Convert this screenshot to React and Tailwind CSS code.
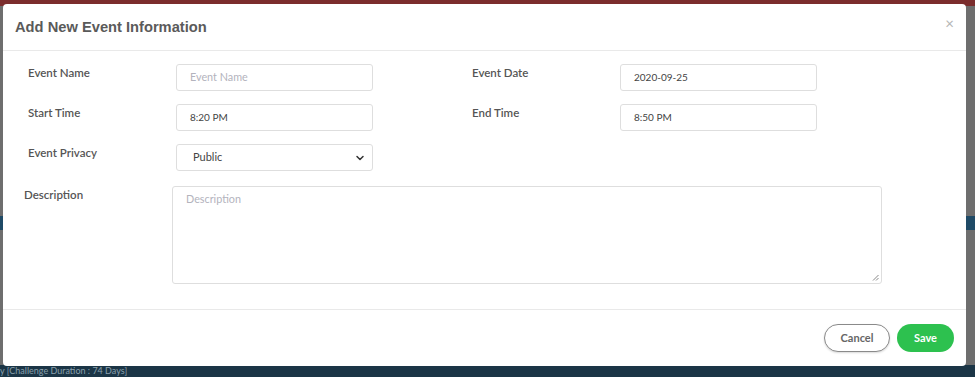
import { ChevronDown } from "lucide-react"

const labelCls = "w-[148px] pt-[2px] text-[11.5px] leading-[14px] font-semibold text-[#555]"
const inputCls =
  "h-[27px] w-[197px] rounded-[3px] border border-[#dedede] bg-white px-[13px] flex items-center text-[10px] text-[#444]"

const Field = ({ label, value, placeholder }) => (
  <div className="flex items-start">
    <div className={labelCls}>{label}</div>
    <div className={inputCls}>
      {value ? <span>{value}</span> : <span className="text-[10.8px] text-[#b3b3bd]">{placeholder}</span>}
    </div>
  </div>
)

const App = () => {
  return (
    <div
      className="relative h-[377px] w-[975px] overflow-hidden bg-[#6e6e6e]"
      style={{ fontFamily: "Lato, 'Noto Sans', sans-serif" }}
    >
      {/* page behind the dim */}
      <div className="flex h-full flex-col">
        <div className="h-[6px] bg-[#7b2d2d]" />
        <div className="flex-1 flex flex-col">
          <div className="h-[210px]" />
          <div className="h-[14px] bg-[#1f4a66]" />
          <div className="flex-1" />
        </div>
        <div className="h-[12px] bg-[#1b3546] text-[9px] leading-[12px] text-[#8aa0ad] whitespace-nowrap">
          y [Challenge Duration : 74 Days]
        </div>
      </div>

      {/* modal */}
      <div className="absolute left-[3px] top-[4px] flex h-[362px] w-[963px] flex-col rounded-[4px] bg-white">
        <div className="flex h-[47px] items-center justify-between border-b border-[#e9e9e9] px-[12px]">
          <h1
            className="text-[14.7px] font-bold text-[#5a5a5a]"
            style={{ fontFamily: "'Liberation Sans', Arial, sans-serif" }}
          >
            Add New Event Information
          </h1>
          <span className="mt-[-8px] text-[15px] leading-none text-[#b5b5b5]">×</span>
        </div>

        <div className="flex-1 border-b border-[#e9e9e9] pt-[13px]">
          <div className="flex flex-col gap-[13px] pl-[25px]">
            <div className="flex">
              <Field label="Event Name" placeholder="Event Name" />
              <div className="w-[99px]" />
              <Field label="Event Date" value="2020-09-25" />
            </div>
            <div className="flex">
              <Field label="Start Time" value="8:20 PM" />
              <div className="w-[99px]" />
              <Field label="End Time" value="8:50 PM" />
            </div>
            <div className="flex items-start">
              <div className={labelCls}>Event Privacy</div>
              <div className={inputCls + " justify-between pl-[16px] pr-[6px] text-[11px] text-[#333]"}>
                <span>Public</span>
                <ChevronDown className="h-[12px] w-[12px] text-[#333]" strokeWidth={3} />
              </div>
            </div>
          </div>

          <div className="mt-[15px] flex items-start pl-[21px]">
            <div className={labelCls}>Description</div>
            <div className="relative h-[98px] w-[710px] rounded-[3px] border border-[#dedede] px-[13px] pt-[4px] text-[10.8px] text-[#b3b3bd]">
              Description
              <svg className="absolute bottom-[2px] right-[2px]" width="7" height="7" viewBox="0 0 7 7">
                <path d="M1 6.5 L6.5 1 M4 6.5 L6.5 4" stroke="#888" strokeWidth="1" />
              </svg>
            </div>
          </div>
        </div>

        <div className="flex h-[56px] items-center justify-end gap-[7px] pr-[12px]">
          <button className="h-[28px] w-[66px] rounded-full border border-[#8a8a8a] bg-white text-[11px] font-bold text-[#666] shadow-[0_1px_2px_rgba(0,0,0,0.15)]">
            Cancel
          </button>
          <button className="h-[28px] w-[57px] rounded-full bg-[#2dc14f] text-[11px] font-bold text-white">
            Save
          </button>
        </div>
      </div>
    </div>
  )
}

export default App
